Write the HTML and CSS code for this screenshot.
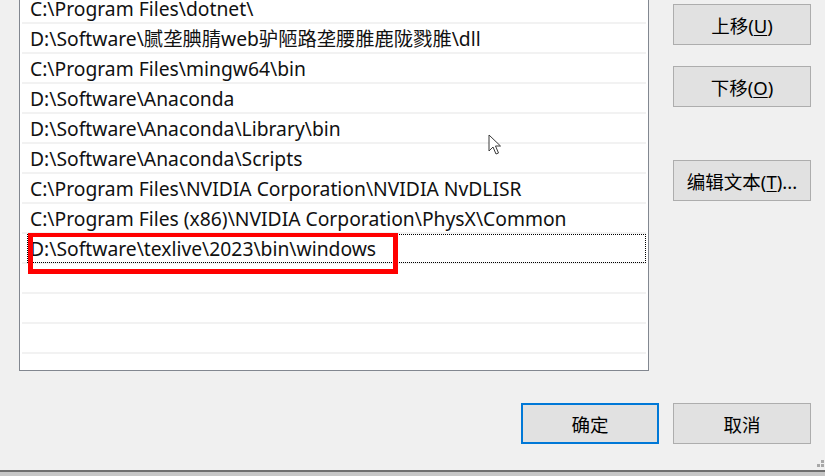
FILE: index.html
```html
<!DOCTYPE html>
<html lang="zh-CN">
<head>
<meta charset="utf-8">
<title>编辑环境变量</title>
<link rel="stylesheet" href="styles.css">
</head>
<body>
<div class="window">
  <div class="main">
    <div class="list">
      <div class="row">C:\Program Files\dotnet\</div>
      <div class="row">D:\Software\腻垄腆腈web驴陋路垄腰脽鹿陇戮脽\dll</div>
      <div class="row">C:\Program Files\mingw64\bin</div>
      <div class="row">D:\Software\Anaconda</div>
      <div class="row">D:\Software\Anaconda\Library\bin</div>
      <div class="row">D:\Software\Anaconda\Scripts</div>
      <div class="row">C:\Program Files\NVIDIA Corporation\NVIDIA NvDLISR</div>
      <div class="row">C:\Program Files (x86)\NVIDIA Corporation\PhysX\Common</div>
      <div class="row selected">D:\Software\texlive\2023\bin\windows</div>
      <div class="row"></div>
      <div class="row"></div>
      <div class="row"></div>
      <div class="row"></div>
      <div class="row"></div>
    </div>
    <div class="side">
      <button class="btn">上移(<u>U</u>)</button>
      <button class="btn">下移(<u>O</u>)</button>
      <button class="btn btn-edit">编辑文本(<u>T</u>)...</button>
    </div>
  </div>
  <div class="footer">
    <button class="btn btn-default">确定</button>
    <button class="btn">取消</button>
  </div>
  <div class="highlight"></div>
  <svg class="cursor" width="14" height="22" viewBox="0 0 14 22">
    <path d="M1 1 L1 17 L5 13 L8 20 L10.5 19 L7.5 12 L12.5 12 Z" fill="#fff" stroke="#3a3a3a" stroke-width="1" stroke-linejoin="miter"/>
  </svg>
  <svg class="grip" width="10" height="10" viewBox="0 0 10 10">
    <rect x="7" y="1" width="3" height="3" fill="#a8a8a8"/>
    <rect x="3" y="5" width="3" height="3" fill="#a8a8a8"/>
    <rect x="7" y="5" width="3" height="3" fill="#a8a8a8"/>
  </svg>
</div>
<div class="frame-bottom"></div>
</body>
</html>
```

FILE: styles.css
```css
html, body {
  margin: 0;
  padding: 0;
  background: #f0f0f0;
  overflow: hidden;
}

.window {
  position: relative;
  width: 825px;
  height: 470px;
  background: #f0f0f0;
  font-family: "Noto Sans", "Noto Sans CJK SC", sans-serif;
  font-size: 19.3px;
  color: #000;
  overflow: hidden;
}

.main {
  display: flex;
  align-items: flex-start;
}

.list {
  margin-top: -7px;
  margin-left: 19px;
  width: 624px;
  height: 376px;
  border: 1px solid #828790;
  background: #fff;
  padding: 0 2px;
  overflow: hidden;
  box-sizing: content-box;
}

.row {
  position: relative;
  height: 26px;
  padding-top: 2px;
  line-height: 26px;
  padding-left: 8px;
  border-bottom: 2px solid #f2f2f2;
  white-space: nowrap;
  color: #111;
}

.row.selected::before {
  content: "";
  position: absolute;
  left: 5px;
  right: 0;
  top: 0;
  bottom: -1px;
  border: 1px dotted #000;
}

.side {
  display: flex;
  flex-direction: column;
  margin-left: 24px;
  margin-top: 4px;
}

.btn {
  width: 138px;
  height: 41px;
  background: #e1e1e1;
  border: 1px solid #adadad;
  font-family: "Noto Sans", "Noto Sans CJK SC", sans-serif;
  font-size: 18.5px;
  color: #000;
  padding: 0;
  margin: 0;
}

.btn u {
  text-decoration-thickness: 1px;
  text-underline-offset: 2px;
}

.side .btn + .btn {
  margin-top: 21px;
}

.side .btn-edit {
  margin-top: 53px !important;
}

.footer {
  display: flex;
  justify-content: flex-end;
  gap: 14px;
  padding-right: 14px;
  margin-top: 32px;
}

.btn-default {
  border: 2px solid #0078d7;
}

.highlight {
  position: absolute;
  left: 28px;
  top: 233px;
  width: 360px;
  height: 32px;
  border: 5px solid #ff0000;
  border-top-width: 4px;
}

.cursor {
  position: absolute;
  left: 488px;
  top: 134px;
}

.grip {
  position: absolute;
  right: 1px;
  bottom: 1px;
}

.frame-bottom {
  height: 4px;
  border-top: 2px solid #6e6e6e;
  background: #c6c6c6;
}
```
